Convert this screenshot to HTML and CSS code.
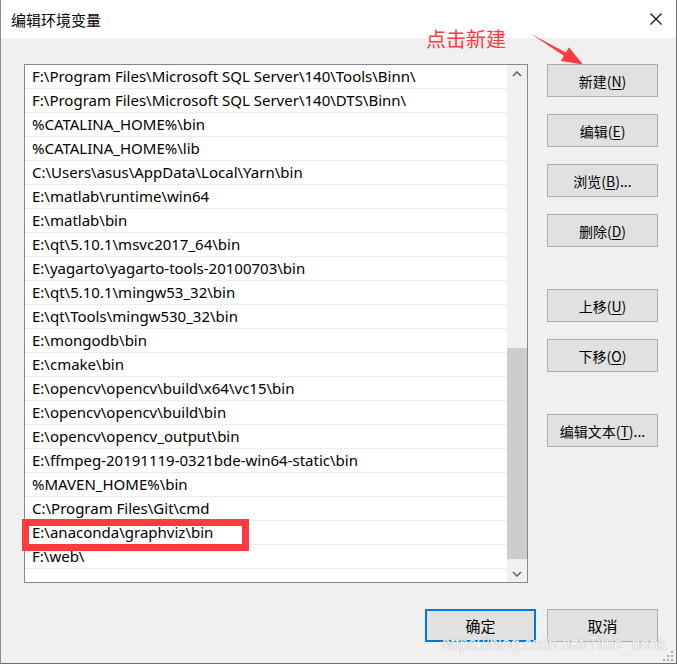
FILE: index.html
```html
<!DOCTYPE html>
<html>
<head>
<meta charset="utf-8">
<title>编辑环境变量</title>
<link rel="stylesheet" href="styles.css">
</head>
<body>
<div class="dlg">
	<div class="dlg-title">
		<span class="caption">编辑环境变量</span>
		<svg class="close" width="12" height="12" viewBox="0 0 12 12"><path d="M0.5 0.5L11.5 11.5M11.5 0.5L0.5 11.5" stroke="#000" stroke-width="1.1" fill="none"/></svg>
	</div>
	<div class="dlg-body">
		<div class="main">
			<div class="pathlist">
				<ul class="rows">
					<li>F:\Program Files\Microsoft SQL Server\140\Tools\Binn\</li>
					<li>F:\Program Files\Microsoft SQL Server\140\DTS\Binn\</li>
					<li>%CATALINA_HOME%\bin</li>
					<li>%CATALINA_HOME%\lib</li>
					<li>C:\Users\asus\AppData\Local\Yarn\bin</li>
					<li>E:\matlab\runtime\win64</li>
					<li>E:\matlab\bin</li>
					<li>E:\qt\5.10.1\msvc2017_64\bin</li>
					<li>E:\yagarto\yagarto-tools-20100703\bin</li>
					<li>E:\qt\5.10.1\mingw53_32\bin</li>
					<li>E:\qt\Tools\mingw530_32\bin</li>
					<li>E:\mongodb\bin</li>
					<li>E:\cmake\bin</li>
					<li>E:\opencv\opencv\build\x64\vc15\bin</li>
					<li>E:\opencv\opencv\build\bin</li>
					<li>E:\opencv\opencv_output\bin</li>
					<li>E:\ffmpeg-20191119-0321bde-win64-static\bin</li>
					<li>%MAVEN_HOME%\bin</li>
					<li>C:\Program Files\Git\cmd</li>
					<li>E:\anaconda\graphviz\bin</li>
					<li>F:\web\</li>
				</ul>
				<div class="vscroll">
					<div class="sb-btn"><svg width="10" height="6" viewBox="0 0 10 6"><path d="M1 5L5 1L9 5" stroke="#606060" stroke-width="1.5" fill="none"/></svg></div>
					<div class="sb-track"><div class="sb-thumb"></div></div>
					<div class="sb-btn"><svg width="10" height="6" viewBox="0 0 10 6"><path d="M1 1L5 5L9 1" stroke="#606060" stroke-width="1.5" fill="none"/></svg></div>
				</div>
				<div class="mark"></div>
			</div>
			<div class="side">
				<div class="grp">
					<button class="btn">新建(<u>N</u>)</button>
					<button class="btn">编辑(<u>E</u>)</button>
					<button class="btn">浏览(<u>B</u>)...</button>
					<button class="btn">删除(<u>D</u>)</button>
				</div>
				<div class="grp">
					<button class="btn">上移(<u>U</u>)</button>
					<button class="btn">下移(<u>O</u>)</button>
				</div>
				<div class="grp">
					<button class="btn">编辑文本(<u>T</u>)...</button>
				</div>
			</div>
		</div>
		<div class="foot">
			<button class="btn primary">确定</button>
			<button class="btn">取消</button>
		</div>
	</div>

	<!-- annotation drawn over the dialog -->
	<div class="tip">点击新建</div>
	<svg class="tip-arrow" width="56" height="34" viewBox="529 32 56 34"><polygon points="531,34 565.9,52.4 568.9,47.2 583,64.5 560.9,61 563.9,55.8" fill="#fc3c3c"/></svg>
	<div class="wm">https://blog.csdn.net/Time_book</div>
	<svg class="grip" width="12" height="10" viewBox="0 0 12 10"><g fill="#a8a8a8"><rect x="9" y="0" width="2" height="2"/><rect x="5" y="4" width="2" height="2"/><rect x="9" y="4" width="2" height="2"/><rect x="1" y="8" width="2" height="2"/><rect x="5" y="8" width="2" height="2"/><rect x="9" y="8" width="2" height="2"/></g></svg>
</div>
</body>
</html>
```

FILE: styles.css
```css
*{box-sizing:border-box;}
html,body{margin:0;padding:0;}
body{background:#fff;font-family:"Noto Sans","Noto Sans CJK SC",sans-serif;color:#000;}

.dlg{position:relative;width:677px;height:664px;display:flex;flex-direction:column;background:#f0f0f0;border-left:1px solid #8c8c8c;border-right:1px solid #6f6f6f;border-bottom:1px solid #6f6f6f;}
.dlg-title{height:38px;flex:none;background:#fff;display:flex;align-items:center;justify-content:space-between;padding:0 14px 0 10px;}
.dlg-title .caption{font:15px "Noto Sans CJK SC",sans-serif;}
.dlg-title .close{display:block;}

.dlg-body{flex:1;display:flex;flex-direction:column;padding:26px 18px 0 23px;}
.main{display:flex;gap:19px;}

.pathlist{position:relative;width:504px;height:519px;border:1px solid #828790;background:#fff;display:flex;}
.rows{list-style:none;margin:0;padding:0;flex:1;min-width:0;}
.rows li{height:24px;line-height:23px;border-bottom:1px solid #ececec;padding-left:7px;font-size:15px;white-space:nowrap;overflow:hidden;}

.vscroll{width:20px;flex:none;background:#f0f0f0;display:flex;flex-direction:column;}
.sb-btn{height:17px;display:flex;align-items:center;justify-content:center;}
.sb-btn svg{display:block;}
.sb-track{flex:1;}
.sb-thumb{margin-top:266px;height:211px;background:#cdcdcd;}

.mark{position:absolute;left:-3px;top:454px;width:227px;height:32px;border:7px solid #fc3c3c;}

.side{width:111px;display:flex;flex-direction:column;}
.grp{display:flex;flex-direction:column;gap:17px;}
.grp+.grp{margin-top:42px;}

.btn{width:111px;height:33px;padding:0;margin:0;background:#e1e1e1;border:1px solid #adadad;font:14px "Noto Sans CJK SC",sans-serif;color:#000;}
.btn u{text-underline-offset:2px;}
.btn.primary{border:2px solid #0078d7;}
.foot{margin-top:26px;display:flex;justify-content:flex-end;gap:11px;}
.foot .btn{font-size:15px;}

.tip{position:absolute;left:425px;top:29px;font:20px/20px "Noto Sans CJK SC",sans-serif;color:#fc3c3c;}
.tip-arrow{position:absolute;left:528px;top:32px;}
.wm{position:absolute;left:441px;top:634px;font:18px/20px "Liberation Sans",Arial,sans-serif;color:rgba(255,255,255,0.95);text-shadow:0 0 1px rgba(0,0,0,0.4);white-space:nowrap;transform:scaleX(0.88);transform-origin:0 0;}
.grip{position:absolute;right:2px;bottom:2px;}
```
